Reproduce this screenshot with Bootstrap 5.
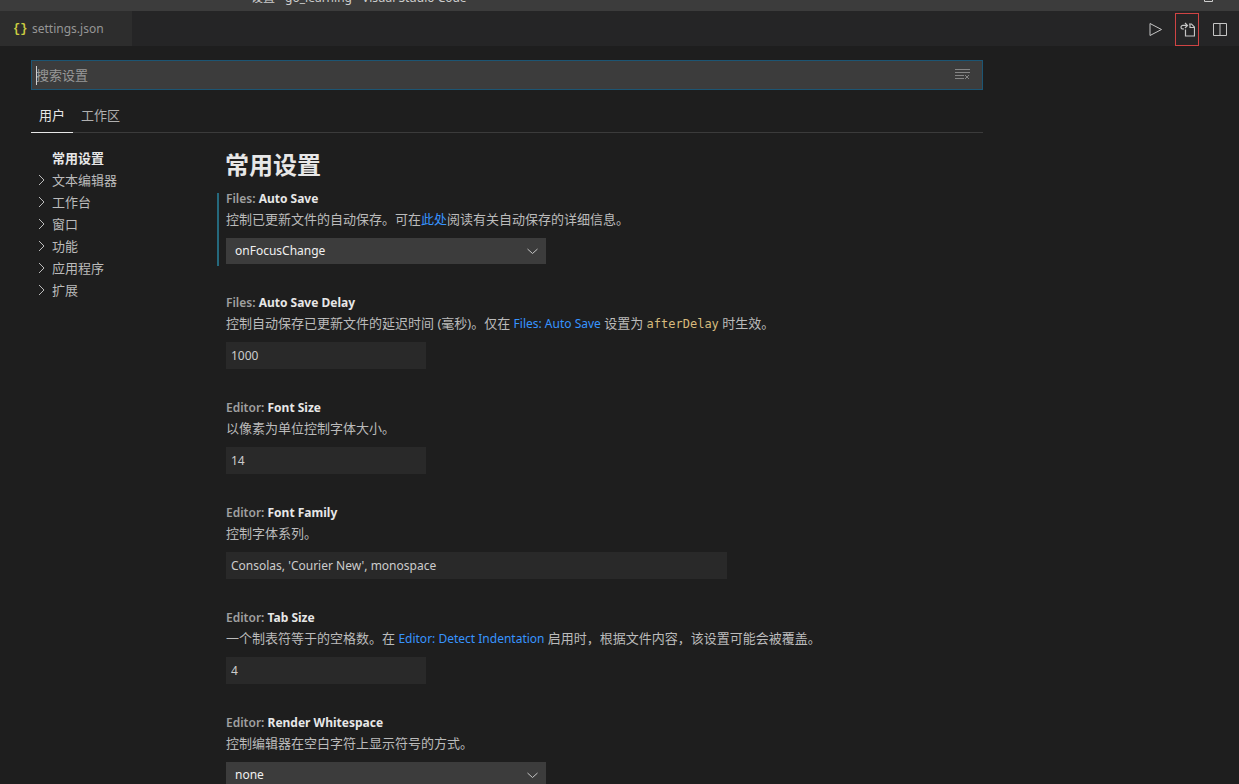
<!DOCTYPE html>
<html lang="zh-CN" data-bs-theme="dark">
<head>
<meta charset="utf-8">
<meta name="viewport" content="width=device-width, initial-scale=1">
<title>设置 - go_learning - Visual Studio Code</title>
<link href="https://cdn.jsdelivr.net/npm/bootstrap@5.3.0/dist/css/bootstrap.min.css" rel="stylesheet">
<style>
  body { font: 13px/20px "Noto Sans", "Noto Sans CJK SC", sans-serif; background: #1e1e1e; color: #ccc; }
  svg { display: block; fill: none; stroke: currentColor; }
  a { color: #3794ff; text-decoration: none; }
  .latin { font-size: 12px; line-height: 12px; }
  .title-bar { height: 11px; background: #3c3c3c; padding-left: 251px; padding-right: 26px; padding-bottom: 4px; font-size: 12px; line-height: 18px; }
  .tab-strip { height: 35px; background: #252526; }
  .file-tab { width: 132px; height: 35px; padding-left: 13px; background: #2d2d2d; color: #969696; }
  .file-tab:hover { color: #ccc; }
  .json-mark { color: #cbcb41; font: 700 12px/20px "Liberation Mono", monospace; width: 15px; }
  .tool-btn { width: 24px; height: 33px; padding: 0; color: #c5c5c5; border: 1px solid transparent; border-radius: 0; }
  .tool-btn.marked { border-color: #d04444; }
  .settings-page { max-width: 983px; padding: 14px 0 0 31px; }
  .search-box { height: 30px; background: #3c3c3c; border: 1px solid #1c5573; color: #ccc; }
  .search-box input { height: 28px; padding: 0 4px; background: transparent; border: 0; outline: 0; font-size: 13px; color: #ccc; }
  .search-box input::placeholder { color: #989898; opacity: 1; }
  .search-caret { width: 1px; height: 19px; left: 4px; top: 5px; background: #d0d0d0; }
  .clear-btn { padding: 0; color: #858585; border: 0; }
  .scope-tabs { height: 43px; padding-top: 10px; border-bottom: 1px solid #3b3b3b; }
  .scope-tabs button { height: 33px; padding: 0 8px 2px; border: 0; background: none; color: #b0b0b0; border-bottom: 1px solid transparent; }
  .scope-tabs button.active { color: #e7e7e7; border-bottom-color: #e7e7e7; }
  .settings-body { padding-top: 14px; }
  .toc { width: 186px; }
  .toc a { height: 22px; line-height: 22px; padding-left: 4px; gap: 5px; color: #bbb; }
  .toc a.active { color: #e7e7e7; font-weight: 700; }
  .toc svg { width: 12px; height: 12px; }
  .group-title { font-size: 24px; line-height: 36px; font-weight: 700; color: #e7e7e7; margin-bottom: 6px; }
  .setting { padding-left: 9px; padding-bottom: 29px; }
  .setting.modified::before { content: ""; position: absolute; left: 0; top: 4px; bottom: 27px; width: 2px; background: #25697d; }
  .setting label { display: block; font-size: 12px; font-weight: 600; color: #a0a0a0; }
  .setting label b { font-weight: 700; color: #e7e7e7; }
  .setting p { line-height: 20px; margin-bottom: 9px; color: #bbb; }
  .setting code { font: 12px/12px "DejaVu Sans Mono", monospace; color: #d7ba7d; }
  .setting input { height: 27px; padding: 0 5px; background: #292929; border: 0; border-radius: 0; font-size: 12px; color: #ccc; }
  .setting input.short { width: 200px; }
  .setting input.long { width: 501px; }
  .pick { width: 320px; color: #f0f0f0; }
  .pick select { appearance: none; display: block; width: 100%; height: 26px; padding: 0 9px; background: #3c3c3c; border: 0; border-radius: 0; font-size: 12px; color: inherit; }
  .pick svg { right: 8px; top: 7px; width: 12px; height: 12px; pointer-events: none; color: #c5c5c5; }
</style>
</head>
<body class="vh-100 overflow-hidden">
<svg class="d-none">
  <symbol id="right" viewBox="0 0 12 12"><path d="M4 1l5 5-5 5"/></symbol>
  <symbol id="down" viewBox="0 0 12 12"><path d="M1.500 4L6.500 8.500 11.500 4"/></symbol>
</svg>

<header class="title-bar d-flex align-items-end justify-content-between overflow-hidden">
  <span>设置 - go_learning - Visual Studio Code</span>
  <svg width="10" height="10" viewBox="0 0 10 10" class="mb-1"><path d="M1.500 .5h8v8h-8z"/></svg>
</header>

<nav class="tab-strip d-flex justify-content-between">
  <a href="#" class="file-tab d-flex align-items-center"><span class="json-mark">{}</span><span class="latin ms-1">settings.json</span></a>
  <div class="d-flex align-items-end gap-2 pe-2">
    <button class="btn tool-btn d-flex align-items-center justify-content-center" type="button" aria-label="运行">
      <svg width="16" height="16" viewBox="0 0 16 16"><path d="M3 1.500v12l11.500-6z"/></svg>
    </button>
    <button class="btn tool-btn marked d-flex align-items-center justify-content-center" type="button" aria-label="打开设置 (json)">
      <svg width="16" height="16" viewBox="0 0 16 16"><path stroke-width="1.200" d="M6.500 7.500v6.500h9V5L12.500 2H10M11 2V5.500h4.500M5 7H4a1.800 1.800 0 0 1-2-1.800a1.800 1.800 0 0 1 2-1.800H8.500M6 1L8.500 3.400 6 6"/></svg>
    </button>
    <button class="btn tool-btn d-flex align-items-center justify-content-center" type="button" aria-label="拆分编辑器">
      <svg width="16" height="16" viewBox="0 0 16 16"><path d="M2.500 1.500h13v12h-13zM9 1.500v12"/></svg>
    </button>
  </div>
</nav>

<main class="settings-page">
  <div class="search-box d-flex align-items-center position-relative">
    <input class="flex-grow-1" type="text" placeholder="搜索设置" aria-label="搜索设置">
    <span class="search-caret position-absolute"></span>
    <button class="btn clear-btn me-2 pe-1" type="button" aria-label="清除搜索">
      <svg width="16" height="16" viewBox="0 0 16 16"><path d="M1 2.500h15M1 5.500h15M1 8.500h9M1 11.500h9M11 8l4 4M15 8l-4 4"/></svg>
    </button>
  </div>
  <div class="scope-tabs d-flex">
    <button type="button" class="active">用户</button>
    <button type="button">工作区</button>
  </div>

  <div class="settings-body d-flex">
    <nav class="toc flex-shrink-0 d-flex flex-column">
      <a href="#" class="active d-flex align-items-center"><svg></svg>常用设置</a>
      <a href="#" class="d-flex align-items-center"><svg><use href="#right"/></svg>文本编辑器</a>
      <a href="#" class="d-flex align-items-center"><svg><use href="#right"/></svg>工作台</a>
      <a href="#" class="d-flex align-items-center"><svg><use href="#right"/></svg>窗口</a>
      <a href="#" class="d-flex align-items-center"><svg><use href="#right"/></svg>功能</a>
      <a href="#" class="d-flex align-items-center"><svg><use href="#right"/></svg>应用程序</a>
      <a href="#" class="d-flex align-items-center"><svg><use href="#right"/></svg>扩展</a>
    </nav>
    <div class="flex-grow-1">
      <h1 class="group-title ps-2">常用设置</h1>

      <div class="setting modified position-relative">
        <label for="autoSave">Files: <b>Auto Save</b></label>
        <p>控制已更新文件的自动保存。可在<a href="#">此处</a>阅读有关自动保存的详细信息。</p>
        <div class="pick position-relative">
          <select id="autoSave"><option>onFocusChange</option></select>
          <svg class="position-absolute"><use href="#down"/></svg>
        </div>
      </div>
      <div class="setting">
        <label for="saveDelay">Files: <b>Auto Save Delay</b></label>
        <p>控制自动保存已更新文件的延迟时间 (毫秒)。仅在 <a href="#" class="latin">Files: Auto Save</a> 设置为 <code>afterDelay</code> 时生效。</p>
        <input id="saveDelay" class="short d-block" type="text" value="1000">
      </div>
      <div class="setting">
        <label for="fontSize">Editor: <b>Font Size</b></label>
        <p>以像素为单位控制字体大小。</p>
        <input id="fontSize" class="short d-block" type="text" value="14">
      </div>
      <div class="setting">
        <label for="fontFamily">Editor: <b>Font Family</b></label>
        <p>控制字体系列。</p>
        <input id="fontFamily" class="long d-block" type="text" value="Consolas, 'Courier New', monospace">
      </div>
      <div class="setting">
        <label for="tabSize">Editor: <b>Tab Size</b></label>
        <p>一个制表符等于的空格数。在 <a href="#" class="latin">Editor: Detect Indentation</a> 启用时，根据文件内容，该设置可能会被覆盖。</p>
        <input id="tabSize" class="short d-block" type="text" value="4">
      </div>
      <div class="setting">
        <label for="whitespace">Editor: <b>Render Whitespace</b></label>
        <p>控制编辑器在空白字符上显示符号的方式。</p>
        <div class="pick position-relative">
          <select id="whitespace"><option>none</option></select>
          <svg class="position-absolute"><use href="#down"/></svg>
        </div>
      </div>
    </div>
  </div>
</main>
<script src="https://cdn.jsdelivr.net/npm/bootstrap@5.3.0/dist/js/bootstrap.bundle.min.js"></script>
</body>
</html>
